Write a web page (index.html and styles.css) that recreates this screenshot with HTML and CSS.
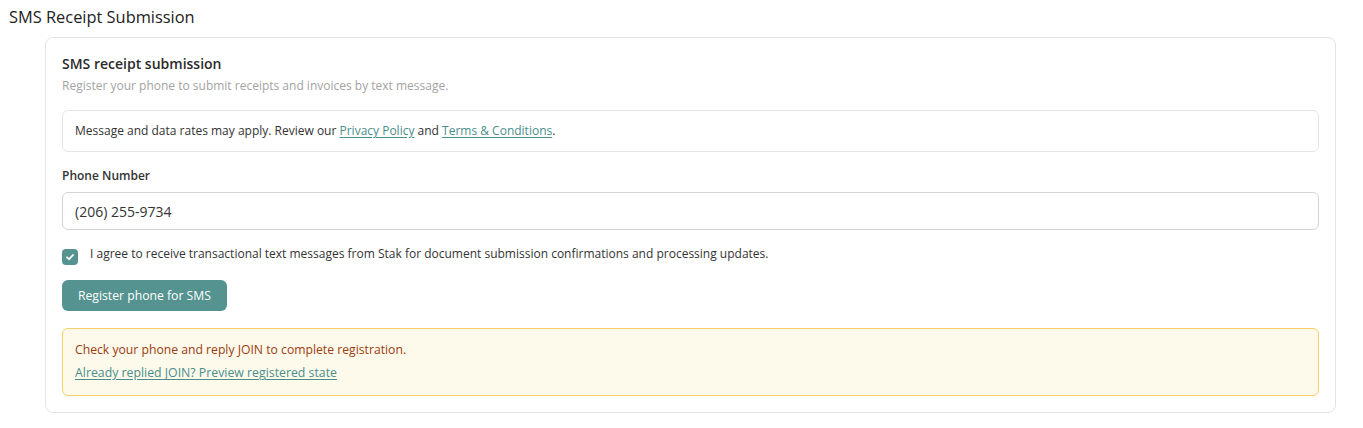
FILE: index.html
```html
<!DOCTYPE html>
<html lang="en">
<head>
<meta charset="utf-8">
<title>SMS Receipt Submission</title>
<link rel="stylesheet" href="styles.css">
</head>
<body>
<div class="page">
  <h1 class="page-title">SMS Receipt Submission</h1>
  <section class="card">
    <h2 class="card-title">SMS receipt submission</h2>
    <p class="card-sub">Register your phone to submit receipts and invoices by text message.</p>
    <div class="info">Message and data rates may apply. Review our <a href="#" class="link">Privacy Policy</a> and <a href="#" class="link">Terms &amp; Conditions</a>.</div>
    <label class="field-label" for="phone">Phone Number</label>
    <input id="phone" class="input" type="text" value="(206) 255-9734">
    <div class="consent">
      <span class="checkbox"><svg width="12" height="12" viewBox="0 0 12 12"><path d="M3 6.3 L5.1 8.2 L9 4" fill="none" stroke="#fff" stroke-width="1.8" stroke-linecap="round" stroke-linejoin="round"/></svg></span>
      <span class="consent-text">I agree to receive transactional text messages from Stak for document submission confirmations and processing updates.</span>
    </div>
    <button class="btn">Register phone for SMS</button>
    <div class="alert">
      <p class="alert-text">Check your phone and reply JOIN to complete registration.</p>
      <a href="#" class="link alert-link">Already replied JOIN? Preview registered state</a>
    </div>
  </section>
</div>
</body>
</html>
```
FILE: styles.css
```css
* { box-sizing: border-box; }
body {
  margin: 0;
  background: #fff;
  font-family: "Open Sans", "Noto Sans", sans-serif;
  color: #333;
}
.page {
  padding: 5px 27px 0 9px;
}
.page-title {
  margin: 0;
  font-size: 16.4px;
  line-height: 24px;
  font-weight: 400;
  color: #222;
}
.card {
  margin: 8px 0 0 36px;
  border: 1px solid #e3e3e3;
  border-radius: 8px;
  padding: 16px 16px 16px;
  display: flex;
  flex-direction: column;
  align-items: flex-start;
}
.card-title {
  margin: 0;
  font-size: 14px;
  line-height: 20px;
  font-weight: 600;
  color: #2b2b2b;
}
.card-sub {
  margin: 3px 0 0;
  font-size: 12px;
  line-height: 18px;
  color: #a3a3a3;
}
.info {
  align-self: stretch;
  margin-top: 15px;
  border: 1px solid #e6e6e6;
  border-radius: 6px;
  padding: 11px 12px 11px;
  font-size: 12px;
  line-height: 18px;
  color: #333;
}
.link {
  color: #4a8e8b;
  text-decoration: underline;
  text-underline-offset: 2px;
}
.field-label {
  margin-top: 15px;
  font-size: 12px;
  line-height: 18px;
  font-weight: 600;
  color: #333;
}
.input {
  align-self: stretch;
  margin-top: 7px;
  height: 38px;
  border: 1px solid #d4d4d4;
  border-radius: 6px;
  padding: 0 12px;
  font-family: inherit;
  font-size: 14px;
  color: #333;
  background: #fff;
  outline: none;
}
.consent {
  margin-top: 15px;
  display: flex;
  align-items: flex-start;
  gap: 12px;
}
.checkbox {
  margin-top: 4px;
  width: 16px;
  height: 16px;
  border-radius: 4px;
  background: #559391;
  display: flex;
  align-items: center;
  justify-content: center;
  flex: none;
}
.consent-text {
  font-size: 12px;
  line-height: 18px;
  color: #333;
}
.btn {
  margin-top: 15px;
  height: 31px;
  padding: 0 16px;
  border: none;
  border-radius: 6px;
  background: #559391;
  color: #fff;
  font-family: inherit;
  font-size: 12.2px;
  line-height: 18px;
}
.alert {
  align-self: stretch;
  margin-top: 17px;
  border: 1px solid #f6d065;
  border-radius: 6px;
  background: #fefaeb;
  padding: 12px 12px 13px;
  display: flex;
  flex-direction: column;
  align-items: flex-start;
  gap: 5px;
}
.alert-text {
  margin: 0;
  font-size: 12.2px;
  line-height: 18px;
  color: #9a3a10;
}
.alert-link {
  font-size: 12.3px;
  line-height: 18px;
}
```
